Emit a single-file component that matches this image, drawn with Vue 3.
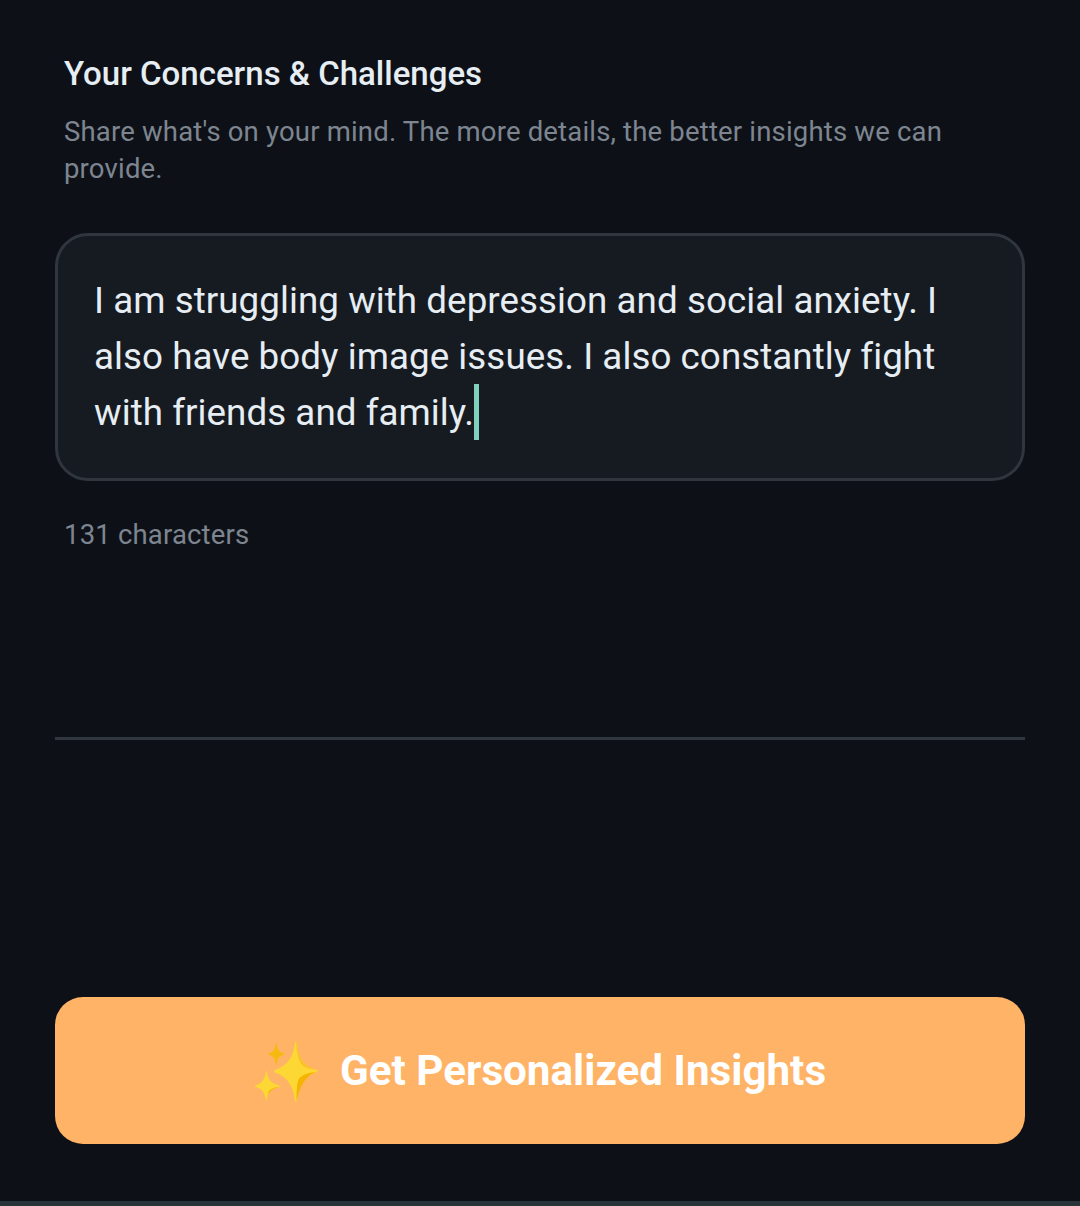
<template>
  <div class="screen">
    <main class="content">
      <section class="intro">
        <h2 class="title">Your Concerns &amp; Challenges</h2>
        <p class="hint">Share what's on your mind. The more details, the better insights we can provide.</p>
      </section>

      <div class="input_box">
        <p class="input_text">{{ concerns }}<span class="caret"></span></p>
      </div>
      <p class="count">{{ concerns.length }} characters</p>

      <div class="divider"></div>

      <button class="submit" type="button">
        <svg class="sparkles" viewBox="0 0 60 60" aria-hidden="true">
          <path d="M39 1.500Q40 -1 41 1.500C42 14 45 24 61 29 62 30 61 31 60 31.500 46 36 42 48 41 60 40.500 61.500 39.500 61.500 39 60 38 48 33 36 19 31.500 18 31 18 30 19 29 33 24 38 14 39 1.500Z" fill="#fdd835" />
          <path d="M40 -0.500Q41 0 41 1.500C42 14 45 24 61 29 52 28 47 26 45 23 41 15 40.500 8 40 -0.500Z" fill="#fbc02d" />
          <path d="M61 30.500Q47 35 41.500 56L40.500 60.500C40.500 48 41 42 43 37.500 47 33 54 31.500 61 30.500Z" fill="#f4b400" />
          <path d="M10 30.500Q10.500 29 11 30.500C12 39 15 42 23.500 44.500 24 45 24 45.500 23.500 46 15 48 12 51 11 58.500 10.500 60 10 60 9.800 58.500 8.500 51 6 48 -0.500 46 -1 45.500 -1 45 -0.500 44.500 6 42 8.500 39 10 30.500Z" fill="#fdd835" />
          <path d="M24 45.500C16 46.500 13 49 12.500 51 12 54 11 56 10.500 59.500 12 51 15 48 24 45.500Z" fill="#f4b400" />
          <path d="M19.800 3Q20.300 1.500 20.800 3C21.500 8.500 23 11 28.300 12.500 28.800 13 28.800 13 28.300 13.500 23 15 21.500 17.500 20.800 23 20.300 24.500 20.300 24.500 19.800 23 19 17.500 17.500 15 12.300 13.500 11.800 13 11.800 13 12.300 12.500 17.500 11 19 8.500 19.800 3Z" fill="#f6b90f" />
        </svg>
        <span>Get Personalized Insights</span>
      </button>
    </main>
    <div class="bottom_strip"></div>
  </div>
</template>

<script setup>
const concerns = 'I am struggling with depression and social anxiety. I also have body image issues. I also constantly fight with friends and family.'
</script>

<style>
html,
body {
  margin: 0;
  background: #0d1117;
}
</style>

<style scoped>
.screen {
  display: flex;
  flex-direction: column;
  width: 1080px;
  height: 1206px;
  overflow: hidden;
  background: #0d1117;
  font-family: Roboto, "Liberation Sans", sans-serif;
}

.content {
  flex: 1;
  display: flex;
  flex-direction: column;
  padding: 0 55px;
}

.intro {
  padding: 53px 9px 0;
}

.title {
  margin: 0;
  font-size: 33px;
  line-height: 42px;
  font-weight: 500;
  color: #e6edf3;
}

.hint {
  margin: 18px 0 0;
  font-size: 27.5px;
  line-height: 37px;
  letter-spacing: 0.18px;
  color: #7d8590;
}

.input_box {
  box-sizing: border-box;
  height: 248px;
  margin-top: 46px;
  padding: 37px 36px;
  border: 3px solid #30363d;
  border-radius: 33px;
  background: #161b22;
}

.input_text {
  margin: 0;
  font-size: 36.75px;
  line-height: 56px;
  letter-spacing: 0.05px;
  color: #e6edf3;
}

.caret {
  display: inline-block;
  width: 5px;
  height: 56px;
  vertical-align: top;
  transform: translateY(-1px);
  background: #7fd1be;
}

.count {
  margin: 0;
  padding: 35px 9px 0;
  font-size: 27.5px;
  line-height: 37px;
  letter-spacing: 0.18px;
  color: #7d8590;
}

.divider {
  height: 3px;
  margin-top: 184px;
  background: #30363d;
}

.submit {
  display: flex;
  align-items: center;
  justify-content: center;
  gap: 24px;
  height: 147px;
  margin-top: 257px;
  padding: 0 0 0 2px;
  border: 0;
  border-radius: 28px;
  background: #ffb366;
  font-family: inherit;
  font-size: 42.2px;
  font-weight: 700;
  color: #fff;
}

.sparkles {
  width: 60px;
  height: 60px;
  overflow: visible;
}

.bottom_strip {
  height: 5px;
  background: #29343a;
}
</style>
